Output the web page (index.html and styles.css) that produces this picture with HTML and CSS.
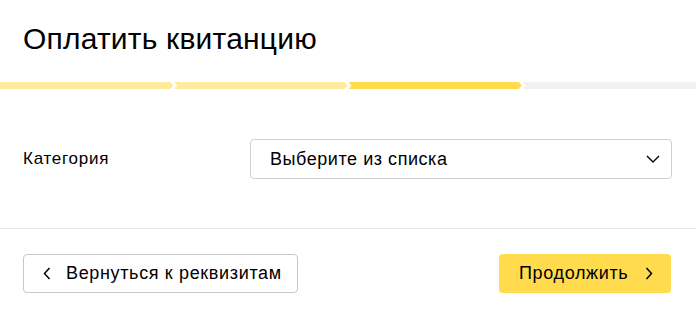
FILE: index.html
```html
<!DOCTYPE html>
<html lang="ru">
<head>
<meta charset="utf-8">
<link rel="stylesheet" href="styles.css">
</head>
<body>
<div class="page">
  <h1 class="title">Оплатить квитанцию</h1>
  <div class="progress">
    <div class="seg seg-first seg-done"></div>
    <div class="seg seg-mid seg-done"></div>
    <div class="seg seg-mid seg-active"></div>
    <div class="seg seg-last seg-todo"></div>
  </div>
  <div class="form">
    <div class="row">
      <div class="label">Категория</div>
      <div class="select">
        <span class="select-text">Выберите из списка</span>
        <svg class="chev" width="14" height="8" viewBox="0 0 14 8"><path d="M1 1l6 6 6-6" fill="none" stroke="#000" stroke-width="1.4"/></svg>
      </div>
    </div>
  </div>
  <div class="footer">
    <button class="btn btn-back">
      <svg width="8" height="13" viewBox="0 0 8 13"><path d="M6.5 1L1.5 6.5l5 5.5" fill="none" stroke="#000" stroke-width="1.5"/></svg>
      <span>Вернуться к реквизитам</span>
    </button>
    <button class="btn btn-next">
      <span>Продолжить</span>
      <svg width="8" height="13" viewBox="0 0 8 13"><path d="M1.5 1l5 5.5-5 5.5" fill="none" stroke="#000" stroke-width="1.5"/></svg>
    </button>
  </div>
</div>
</body>
</html>
```
FILE: styles.css
```css
* { box-sizing: border-box; }
html, body { margin: 0; padding: 0; background: #fff; }
body { font-family: "Liberation Sans", Arial, sans-serif; color: #000; width: 696px; height: 313px; overflow: hidden; }
.page { display: flex; flex-direction: column; }
.title { margin: 0; padding: 21px 23px 0; font-size: 30px; font-weight: 400; line-height: 36px; height: 82px; letter-spacing: 0.2px; }
.progress { display: flex; height: 7px; gap: 1px; }
.seg { flex: 1; height: 7px; }
.seg-first { clip-path: polygon(0 0, calc(100% - 3px) 0, 100% 50%, calc(100% - 3px) 100%, 0 100%); }
.seg-mid { clip-path: polygon(0 0, calc(100% - 3px) 0, 100% 50%, calc(100% - 3px) 100%, 0 100%, 3px 50%); }
.seg-last { clip-path: polygon(0 0, 100% 0, 100% 100%, 0 100%, 3px 50%); }
.seg-done { background: #ffeba0; }
.seg-active { background: #ffdb4d; }
.seg-todo { background: #f3f2f0; }
.form { padding: 50px 24px 49px 23px; border-bottom: 1px solid #e8e8e8; }
.row { display: flex; align-items: center; }
.label { width: 227px; font-size: 17px; letter-spacing: 0.75px; }
.select { flex: 1; height: 40px; border: 1px solid #d0d0d0; border-radius: 4px; display: flex; align-items: center; justify-content: space-between; padding: 0 11px 0 19px; }
.select-text { font-size: 18px; letter-spacing: 0.55px; }
.chev { display: block; }
.footer { display: flex; justify-content: space-between; padding: 25px 25px 0 23px; }
.btn { height: 39px; border-radius: 4px; font-family: inherit; font-size: 18px; letter-spacing: 0.65px; color: #000; display: flex; align-items: center; cursor: pointer; }
.btn-back { width: 275px; background: #fff; border: 1px solid #c8c8c8; padding: 0 0 0 19px; gap: 15px; }
.btn-next { width: 172px; background: #ffdb4d; border: none; padding: 0 0 0 20px; gap: 17px; }
.btn svg { display: block; }
```
